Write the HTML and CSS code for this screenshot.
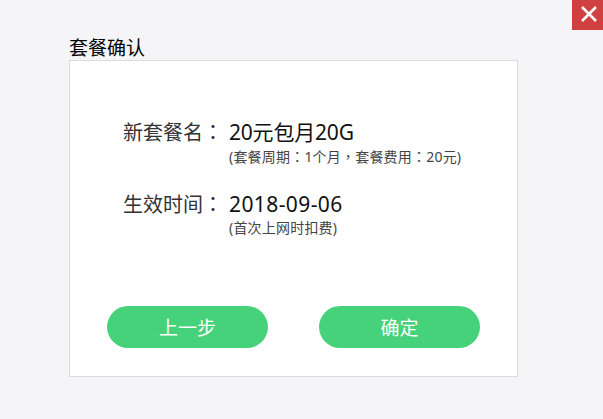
FILE: index.html
```html
<!DOCTYPE html>
<html lang="zh-CN">
<head>
    <meta charset="UTF-8">
    <meta name="viewport" content="width=device-width, initial-scale=1.0">
    <title>套餐确认</title>
    <link rel="stylesheet" href="styles.css">
</head>
<body>
    <button class="close-button" aria-label="关闭">
        <svg width="18" height="18" viewBox="0 0 18 18">
            <path d="M2 2 L16 16 M16 2 L2 16" stroke="#fff" stroke-width="2.6" fill="none"/>
        </svg>
    </button>
    <div class="container">
        <h1>套餐确认</h1>
        <div class="card">
            <div class="info">
                <div class="row">
                    <div class="label">新套餐名<span class="punct" lang="zh-Hant">：</span></div>
                    <div class="value">
                        <div class="main">20元包月20G</div>
                        <div class="note">(套餐周期<span class="punct" lang="zh-Hant">：</span>1个月<span class="punct" lang="zh-Hant">，</span>套餐费用<span class="punct" lang="zh-Hant">：</span>20元)</div>
                    </div>
                </div>
                <div class="row">
                    <div class="label">生效时间<span class="punct" lang="zh-Hant">：</span></div>
                    <div class="value">
                        <div class="main date">2018-09-06</div>
                        <div class="note">(首次上网时扣费)</div>
                    </div>
                </div>
            </div>
            <div class="buttons">
                <button class="green-button">上一步</button>
                <button class="green-button">确定</button>
            </div>
        </div>
    </div>
</body>
</html>
```

FILE: styles.css
```css
html, body {
    height: 100%;
}
body {
    margin: 0;
    background-color: #f5f5f7;
    font-family: "Noto Sans", "Noto Sans CJK SC", sans-serif;
    overflow: hidden;
}
.close-button {
    position: absolute;
    top: 0;
    right: 0;
    width: 31px;
    height: 30px;
    padding: 0 0 3px 3px;
    border: none;
    background-color: #d04040;
    display: flex;
    align-items: center;
    justify-content: center;
}
.container {
    width: 449px;
    padding: 37px 0 0 69px;
}
h1 {
    margin: 0 0 1px;
    font-size: 19px;
    line-height: 22px;
    font-weight: normal;
    color: #000;
}
.card {
    box-sizing: border-box;
    height: 317px;
    background: #fff;
    border: 1px solid #dcdcdc;
    padding: 57px 37px 0;
}
.info {
    height: 188px;
    padding-left: 16px;
}
.row {
    display: flex;
    margin-bottom: 23px;
}
.label {
    width: 106px;
    font-size: 20px;
    line-height: 28px;
    color: #333;
    white-space: nowrap;
}
.punct {
    font-family: "Noto Sans CJK TC", sans-serif;
}
.main {
    font-size: 21px;
    line-height: 28px;
    color: #111;
    letter-spacing: -0.2px;
}
.date {
    letter-spacing: 0.4px;
}
.note {
    font-size: 14px;
    line-height: 20px;
    color: #444;
    letter-spacing: 0.2px;
    white-space: nowrap;
}
.buttons {
    display: flex;
    justify-content: space-between;
    width: 373px;
}
.green-button {
    width: 161px;
    height: 42px;
    padding: 0;
    border: none;
    border-radius: 21px;
    background-color: #46d27a;
    color: #fff;
    font-family: inherit;
    font-size: 19px;
}
```
